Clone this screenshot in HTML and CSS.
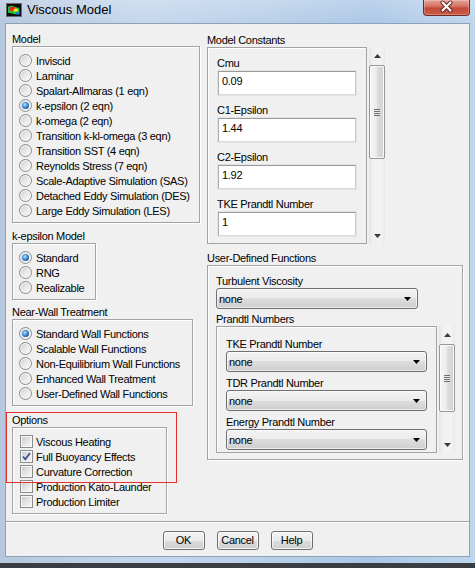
FILE: index.html
```html
<!DOCTYPE html>
<html>
<head>
<meta charset="utf-8">
<title>Viscous Model</title>
<link rel="stylesheet" href="styles.css">
</head>
<body>
<div class="window">
  <div class="titlebar">
    <svg class="appicon" width="16" height="14" viewBox="0 0 16 14">
      <rect x="0.5" y="0.5" width="15" height="13" fill="#0c0c0c" stroke="#6a6a6a"/>
      <path d="M2 4 Q5 2 8 3.5 T13 4.5 L13.5 10.5 Q9 11.5 6 10.5 T2 10 Z" fill="#22c43a"/>
      <ellipse cx="6.2" cy="6" rx="3.2" ry="2.2" fill="#e42a1e"/>
      <ellipse cx="9.8" cy="7.2" rx="2.3" ry="1.6" fill="#f2e21c"/>
      <path d="M10 9.5 Q12 8 13.5 8.5 L13.5 11.5 L9 11.5 Z" fill="#1f7fe0"/>
    </svg>
    <span class="title">Viscous Model</span>
    <div class="close">
      <svg width="45" height="15" viewBox="0 0 45 15">
        <path d="M18.5 2.5 L26.5 10.5 M26.5 2.5 L18.5 10.5" stroke="#5a2520" stroke-width="4" stroke-linecap="round"/>
        <path d="M18.5 2.5 L26.5 10.5 M26.5 2.5 L18.5 10.5" stroke="#ffffff" stroke-width="2.2" stroke-linecap="round"/>
      </svg>
    </div>
  </div>
  <div class="client">
    <div class="columns">
      <div class="col-left">
        <div class="glabel first">Model</div>
        <div class="gbox rbox">
          <div class="row"><span class="radio"></span>Inviscid</div>
          <div class="row"><span class="radio"></span>Laminar</div>
          <div class="row"><span class="radio"></span>Spalart-Allmaras (1 eqn)</div>
          <div class="row"><span class="radio on"></span>k-epsilon (2 eqn)</div>
          <div class="row"><span class="radio"></span>k-omega (2 eqn)</div>
          <div class="row"><span class="radio"></span>Transition k-kl-omega (3 eqn)</div>
          <div class="row"><span class="radio"></span>Transition SST (4 eqn)</div>
          <div class="row"><span class="radio"></span>Reynolds Stress (7 eqn)</div>
          <div class="row"><span class="radio"></span>Scale-Adaptive Simulation (SAS)</div>
          <div class="row"><span class="radio"></span>Detached Eddy Simulation (DES)</div>
          <div class="row"><span class="radio"></span>Large Eddy Simulation (LES)</div>
        </div>

        <div class="glabel mt6">k-epsilon Model</div>
        <div class="gbox rbox w-keps">
          <div class="row"><span class="radio on"></span>Standard</div>
          <div class="row"><span class="radio"></span>RNG</div>
          <div class="row"><span class="radio"></span>Realizable</div>
        </div>

        <div class="glabel mt5">Near-Wall Treatment</div>
        <div class="gbox rbox w-wall">
          <div class="row"><span class="radio on"></span>Standard Wall Functions</div>
          <div class="row"><span class="radio"></span>Scalable Wall Functions</div>
          <div class="row"><span class="radio"></span>Non-Equilibrium Wall Functions</div>
          <div class="row"><span class="radio"></span>Enhanced Wall Treatment</div>
          <div class="row"><span class="radio"></span>User-Defined Wall Functions</div>
        </div>

        <div class="glabel mt7">Options</div>
        <div class="gbox cbox w-opt">
          <div class="row"><span class="check"></span>Viscous Heating</div>
          <div class="row"><span class="check"><svg width="11" height="11" viewBox="0 0 11 11"><path d="M2 5.5 L4.3 8.3 L9 2" fill="none" stroke="#3d4f8f" stroke-width="1.7"/></svg></span>Full Buoyancy Effects</div>
          <div class="row"><span class="check"></span>Curvature Correction</div>
          <div class="row"><span class="check"></span>Production Kato-Launder</div>
          <div class="row"><span class="check"></span>Production Limiter</div>
        </div>
      </div>

      <div class="col-right">
        <div class="glabel first-r">Model Constants</div>
        <div class="pane mc">
          <div class="pbox mc-box">
            <div class="flabel">Cmu</div>
            <div class="input"><span>0.09</span></div>
            <div class="flabel">C1-Epsilon</div>
            <div class="input"><span>1.44</span></div>
            <div class="flabel">C2-Epsilon</div>
            <div class="input"><span>1.92</span></div>
            <div class="flabel">TKE Prandtl Number</div>
            <div class="input"><span>1</span></div>
          </div>
          <div class="vscroll">
            <div class="sb-btn"><svg width="7" height="4" viewBox="0 0 7 4"><path d="M0 4 L3.5 0 L7 4Z" fill="#3a3a3a"/></svg></div>
            <div class="track"><div class="thumb mc-thumb"><span class="grip"></span></div></div>
            <div class="sb-btn"><svg width="7" height="4" viewBox="0 0 7 4"><path d="M0 0 L3.5 4 L7 0Z" fill="#3a3a3a"/></svg></div>
          </div>
        </div>

        <div class="glabel mt7">User-Defined Functions</div>
        <div class="gbox udf">
          <div class="flabel">Turbulent Viscosity</div>
          <div class="combo wide"><span>none</span><svg width="7" height="4" viewBox="0 0 7 4"><path d="M0 0 L3.5 4 L7 0Z" fill="#000"/></svg></div>
          <div class="flabel mt3">Prandtl Numbers</div>
          <div class="pane pn">
            <div class="pbox pn-box">
              <div class="flabel">TKE Prandtl Number</div>
              <div class="combo"><span>none</span><svg width="7" height="4" viewBox="0 0 7 4"><path d="M0 0 L3.5 4 L7 0Z" fill="#000"/></svg></div>
              <div class="flabel">TDR Prandtl Number</div>
              <div class="combo"><span>none</span><svg width="7" height="4" viewBox="0 0 7 4"><path d="M0 0 L3.5 4 L7 0Z" fill="#000"/></svg></div>
              <div class="flabel">Energy Prandtl Number</div>
              <div class="combo"><span>none</span><svg width="7" height="4" viewBox="0 0 7 4"><path d="M0 0 L3.5 4 L7 0Z" fill="#000"/></svg></div>
            </div>
            <div class="vscroll">
              <div class="sb-btn"><svg width="7" height="4" viewBox="0 0 7 4"><path d="M0 4 L3.5 0 L7 4Z" fill="#3a3a3a"/></svg></div>
              <div class="track"><div class="thumb pn-thumb"><span class="grip"></span></div></div>
              <div class="sb-btn"><svg width="7" height="4" viewBox="0 0 7 4"><path d="M0 0 L3.5 4 L7 0Z" fill="#3a3a3a"/></svg></div>
            </div>
          </div>
        </div>
      </div>
    </div>

    <div class="sep"></div>
    <div class="buttons">
      <button class="btn">OK</button>
      <button class="btn">Cancel</button>
      <button class="btn">Help</button>
    </div>

    <div class="annot"></div>
  </div>
</div>
</body>
</html>
```

FILE: styles.css
```css
* { box-sizing: border-box; }
html, body { margin: 0; padding: 0; }
body {
  width: 475px;
  height: 568px;
  overflow: hidden;
  background: #3a3d42;
  font-family: "Liberation Sans", Arial, sans-serif;
  font-size: 11px;
  letter-spacing: -0.3px;
  color: #000;
}

.window {
  position: relative;
  width: 475px;
  height: 563px;
  padding: 0 5px 6px 5px;
  background:
    linear-gradient(180deg, rgba(255,255,255,0.22), rgba(255,255,255,0) 24px),
    linear-gradient(90deg, #b5c8de 0%, #c4d7ed 30%, #b9d0e9 55%, #abc7e6 78%, #bfd6ef 100%);
}

/* title bar */
.titlebar {
  height: 23px;
  display: flex;
  align-items: flex-start;
}
.appicon { margin: 3px 0 0 1px; flex: none; }
.title {
  margin-left: 5px;
  font-size: 13px;
  letter-spacing: 0;
  line-height: 20px;
  color: #000;
}
.close {
  margin-left: auto;
  width: 47px;
  height: 16px;
  border: 1px solid #6e2c24;
  border-top: none;
  border-radius: 0 0 4px 4px;
  background: linear-gradient(180deg, #e6a296 0%, #d67668 40%, #c4493b 55%, #cc5c44 100%);
  box-shadow: inset 0 0 0 1px rgba(255,255,255,0.25);
  display: flex;
  align-items: flex-start;
}

/* client area */
.client {
  position: relative;
  height: 534px;
  border: 1px solid #8fa1b5;
  background: #f0f0f0;
}
.columns {
  display: grid;
  grid-template-columns: 188px 256px;
  column-gap: 7px;
  padding-left: 6px;
  height: 490px;
}
.col-left, .col-right { display: flex; flex-direction: column; align-items: flex-start; }

.glabel { height: 14px; line-height: 14px; white-space: nowrap; }
.glabel.first { margin-top: 8px; }
.glabel.first-r { margin-top: 9px; }
.mt3 { margin-top: 3px; }
.mt5 { margin-top: 5px; }
.mt6 { margin-top: 6px; }
.mt7 { margin-top: 7px; }

.gbox {
  border: 1px solid #a3a3a3;
  box-shadow: 1px 1px 0 #ffffff, inset 1px 1px 0 #ffffff;
  width: 188px;
}
.rbox { padding: 6px 0 4px 6px; }
.cbox { padding: 6px 0 4px 7px; }
.w-keps { width: 84px; }
.w-wall { width: 181px; }
.w-opt { width: 155px; }

.row {
  height: 15px;
  display: flex;
  align-items: center;
  white-space: nowrap;
}

.radio {
  position: relative;
  flex: none;
  width: 13px;
  height: 13px;
  margin-right: 4px;
  border-radius: 50%;
  border: 1px solid #8b8c8c;
  background: linear-gradient(135deg, #c9c9c9 0%, #e6e6e6 45%, #fbfbfb 100%);
  box-shadow: inset 0 0 0 1px #f6f6f6;
}
.radio.on::after {
  content: "";
  position: absolute;
  left: 2px;
  top: 2px;
  width: 7px;
  height: 7px;
  border-radius: 50%;
  background: radial-gradient(circle at 40% 38%, #bfe6ff 0%, #4a9ae0 38%, #15508f 78%, #0b3a6e 100%);
}

.check {
  flex: none;
  width: 13px;
  height: 13px;
  margin-right: 3px;
  border: 1px solid #8b8c8c;
  background: linear-gradient(135deg, #c6c8cc 0%, #e3e4e6 50%, #f7f7f7 100%);
  box-shadow: inset 0 0 0 1px #f7f7f7;
  display: flex;
  align-items: center;
  justify-content: center;
}

/* scroll panes */
.pane { display: flex; }
.pane.mc { height: 197px; width: 178px; }
.pbox {
  border: 1px solid #a3a3a3;
  box-shadow: inset 1px 1px 0 #ffffff;
  overflow: hidden;
}
.mc-box { width: 160px; padding: 8px 0 0 9px; }
.flabel { height: 14px; line-height: 14px; white-space: nowrap; }

.input {
  width: 140px;
  height: 26px;
  margin-bottom: 7px;
  border: 1px solid #e3e3e3;
}
.input span {
  display: block;
  height: 100%;
  background: #fff;
  border: 1px solid;
  border-color: #9b9b9b #c9c9c9 #dadada #acacac;
  padding: 2px 3px;
  line-height: 14px;
}

.vscroll {
  width: 16px;
  margin-left: 2px;
  display: flex;
  flex-direction: column;
  background: linear-gradient(90deg, #e4e4e4 0%, #f1f1f1 25%, #f3f3f3 75%, #e9e9e9 100%);
}
.sb-btn {
  height: 17px;
  flex: none;
  display: flex;
  align-items: center;
  justify-content: center;
}
.track { flex: 1; }
.thumb {
  margin-top: 1px;
  border: 1px solid #979797;
  border-radius: 2px;
  background: linear-gradient(90deg, #f5f5f5 0%, #ececec 45%, #dcdcdc 55%, #d2d2d2 100%);
  box-shadow: inset 0 0 0 1px #fbfbfb;
  display: flex;
  align-items: center;
  justify-content: center;
}
.mc-thumb { height: 94px; }
.pn-thumb { height: 68px; }
.grip {
  width: 6px;
  height: 7px;
  background: repeating-linear-gradient(180deg, #6f6f6f 0 1px, #e8e8e8 1px 2px);
}

/* user-defined functions */
.udf {
  width: 256px;
  height: 195px;
  padding: 8px 0 0 8px;
}
.combo {
  width: 201px;
  height: 21px;
  border: 1px solid #707070;
  border-radius: 3px;
  background: linear-gradient(180deg, #f3f3f3 0%, #ebebeb 50%, #dddddd 50%, #cfcfcf 100%);
  box-shadow: inset 0 0 0 1px rgba(255,255,255,0.6);
  display: flex;
  align-items: center;
  justify-content: space-between;
  padding: 0 6px 0 2px;
}
.combo.wide { width: 202px; }
.pane.pn { height: 127px; width: 239px; }
.pn-box { width: 221px; padding: 10px 0 0 9px; }
.pn-box .combo { margin-bottom: 4px; }

/* bottom */
.sep {
  margin-top: 7px;
  height: 2px;
  border-top: 1px solid #a0a0a0;
  border-bottom: 1px solid #ffffff;
}
.buttons {
  margin-top: 8px;
  display: flex;
  justify-content: center;
  gap: 12px;
}
.btn {
  width: 42px;
  height: 19px;
  padding: 0;
  border: 1px solid #707070;
  border-radius: 3px;
  background: linear-gradient(180deg, #f3f3f3 0%, #ebebeb 50%, #dddddd 50%, #cfcfcf 100%);
  box-shadow: inset 0 0 0 1px rgba(255,255,255,0.7);
  font-family: "Liberation Sans", Arial, sans-serif;
  font-size: 11px;
  letter-spacing: -0.3px;
  line-height: 17px;
  color: #000;
}

/* red annotation rectangle drawn over the dialog */
.annot {
  position: absolute;
  left: 0;
  top: 388px;
  width: 171px;
  height: 71px;
  border: 1px solid #e5302c;
}
```
